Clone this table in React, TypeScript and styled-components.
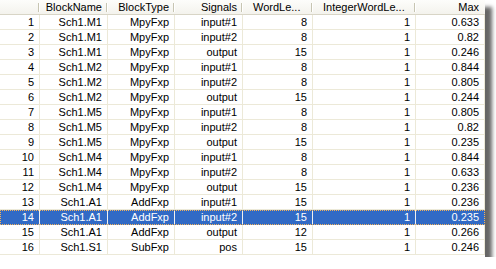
import React from "react";
import styled, { createGlobalStyle } from "styled-components";

const GlobalStyle = createGlobalStyle`
  html, body {
    margin: 0;
    padding: 0;
    background: #ffffff;
  }
  body {
    font-family: "Liberation Sans", Arial, sans-serif;
    font-size: 11px;
  }
`;

const columns = [
  { key: "idx", title: "", width: 40 },
  { key: "block", title: "BlockName", width: 68 },
  { key: "type", title: "BlockType", width: 67 },
  { key: "signal", title: "Signals", width: 68 },
  { key: "word", title: "WordLe...", width: 70 },
  { key: "int", title: "IntegerWordLe...", width: 103 },
  { key: "max", title: "Max", width: 69 },
];

const template = columns.map((c) => `${c.width}px`).join(" ");

const rows: [string, string, string, string, string, string][] = [
  ["Sch1.M1", "MpyFxp", "input#1", "8", "1", "0.633"],
  ["Sch1.M1", "MpyFxp", "input#2", "8", "1", "0.82"],
  ["Sch1.M1", "MpyFxp", "output", "15", "1", "0.246"],
  ["Sch1.M2", "MpyFxp", "input#1", "8", "1", "0.844"],
  ["Sch1.M2", "MpyFxp", "input#2", "8", "1", "0.805"],
  ["Sch1.M2", "MpyFxp", "output", "15", "1", "0.244"],
  ["Sch1.M5", "MpyFxp", "input#1", "8", "1", "0.805"],
  ["Sch1.M5", "MpyFxp", "input#2", "8", "1", "0.82"],
  ["Sch1.M5", "MpyFxp", "output", "15", "1", "0.235"],
  ["Sch1.M4", "MpyFxp", "input#1", "8", "1", "0.844"],
  ["Sch1.M4", "MpyFxp", "input#2", "8", "1", "0.633"],
  ["Sch1.M4", "MpyFxp", "output", "15", "1", "0.236"],
  ["Sch1.A1", "AddFxp", "input#1", "15", "1", "0.236"],
  ["Sch1.A1", "AddFxp", "input#2", "15", "1", "0.235"],
  ["Sch1.A1", "AddFxp", "output", "12", "1", "0.266"],
  ["Sch1.S1", "SubFxp", "pos", "15", "1", "0.246"],
];

const SELECTED = 13;

export default function App() {
  return (
    <>
      <GlobalStyle />
      <Frame>
        <HeaderRow>
          {columns.map((c) => (
            <HeaderCell key={c.key} $left={c.key === "word" || c.key === "int"}>
              {c.title}
            </HeaderCell>
          ))}
        </HeaderRow>
        {rows.map((r, i) => (
          <Row key={i} $selected={i === SELECTED}>
            <Cell $selected={i === SELECTED}>{i + 1}</Cell>
            {r.map((v, j) => (
              <Cell key={j} $selected={i === SELECTED}>
                {v}
              </Cell>
            ))}
          </Row>
        ))}
      </Frame>
    </>
  );
}

const Frame = styled.div`
  width: 485px;
  height: 257px;
  background: #ffffff;
  box-shadow: 7px 7px 4px rgba(0, 0, 0, 0.6);
  overflow: hidden;
  color: #000;
`;

const HeaderRow = styled.div`
  display: grid;
  grid-template-columns: ${template};
  height: 15px;
  background: linear-gradient(#fdfdfb, #f3f2ec);
  box-shadow: inset 0 -1px 0 #d8d5c6;
`;

const HeaderCell = styled.div<{ $left?: boolean }>`
  position: relative;
  height: 15px;
  line-height: 15px;
  padding: 0 6px 0 ${(p) => (p.$left ? "10px" : "0")};
  text-align: ${(p) => (p.$left ? "left" : "right")};
  white-space: nowrap;
  overflow: hidden;
  color: #000;

  &::after {
    content: "";
    position: absolute;
    right: 1px;
    top: 3px;
    height: 9px;
    width: 1px;
    background: #c7c5b2;
    box-shadow: 1px 0 0 #ffffff;
  }

  &:last-child::after {
    display: none;
  }
`;

const Row = styled.div<{ $selected?: boolean }>`
  display: grid;
  grid-template-columns: ${template};
  height: 15px;
  background: ${(p) => (p.$selected ? "#316ac5" : "#ffffff")};
  outline: ${(p) => (p.$selected ? "1px dotted #f3b25a" : "none")};
  outline-offset: -1px;
`;

const Cell = styled.div<{ $selected?: boolean }>`
  height: 15px;
  line-height: 14px;
  box-sizing: border-box;
  padding-right: 5px;
  text-align: right;
  white-space: nowrap;
  overflow: hidden;
  color: ${(p) => (p.$selected ? "#ffffff" : "#000000")};
  border-right: 1px solid ${(p) => (p.$selected ? "#f0f0f0" : "#ece9d8")};
  border-bottom: 1px solid ${(p) => (p.$selected ? "#316ac5" : "#ece9d8")};

  &:last-child {
    border-right-color: ${(p) => (p.$selected ? "#316ac5" : "#ece9d8")};
  }
`;
